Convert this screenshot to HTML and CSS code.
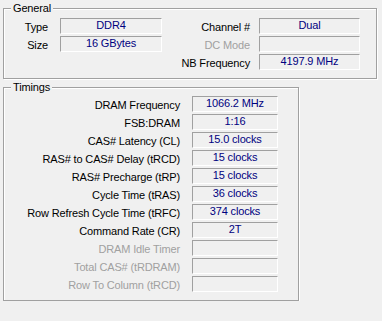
FILE: index.html
```html
<!DOCTYPE html>
<html lang="en">
<head>
    <meta charset="UTF-8">
    <title>Memory</title>
    <link rel="stylesheet" href="styles.css">
</head>
<body>
    <div class="tab">
        <!-- General -->
        <div class="group general">
            <span class="legend">General</span>
            <div class="rows general-rows">
                <div class="label left">Type</div>
                <div class="field">DDR4</div>
                <div class="label right">Channel #</div>
                <div class="field">Dual</div>

                <div class="label left">Size</div>
                <div class="field">16 GBytes</div>
                <div class="label right off">DC Mode</div>
                <div class="field"></div>

                <div></div>
                <div></div>
                <div class="label right">NB Frequency</div>
                <div class="field">4197.9 MHz</div>
            </div>
        </div>

        <!-- Timings -->
        <div class="group timings">
            <span class="legend">Timings</span>
            <div class="rows timing-rows">
                <div class="label">DRAM Frequency</div>
                <div class="field">1066.2 MHz</div>
                <div class="label">FSB:DRAM</div>
                <div class="field">1:16</div>
                <div class="label">CAS# Latency (CL)</div>
                <div class="field">15.0 clocks</div>
                <div class="label">RAS# to CAS# Delay (tRCD)</div>
                <div class="field">15 clocks</div>
                <div class="label">RAS# Precharge (tRP)</div>
                <div class="field">15 clocks</div>
                <div class="label">Cycle Time (tRAS)</div>
                <div class="field">36 clocks</div>
                <div class="label">Row Refresh Cycle Time (tRFC)</div>
                <div class="field">374 clocks</div>
                <div class="label">Command Rate (CR)</div>
                <div class="field">2T</div>
                <div class="label off">DRAM Idle Timer</div>
                <div class="field"></div>
                <div class="label off">Total CAS# (tRDRAM)</div>
                <div class="field"></div>
                <div class="label off">Row To Column (tRCD)</div>
                <div class="field"></div>
            </div>
        </div>
    </div>
</body>
</html>
```

FILE: styles.css
```css
body {
    margin: 0;
    background-color: #f0f0f0;
    font-family: "Liberation Sans", Arial, sans-serif;
    font-size: 11px;
    letter-spacing: -0.15px;
    color: #000;
}
.tab {
    padding: 8px 0 0 3px;
}
.group {
    position: relative;
    border: 1px solid #a0a0a0;
    box-shadow: 1px 1px 0 #fff, inset 1px 1px 0 #fff;
}
.general {
    width: 372px;
    padding: 9px 0 8px 0;
}
.timings {
    width: 294px;
    margin-top: 8px;
    padding: 8px 0 8px 0;
}
.legend {
    position: absolute;
    left: 7px;
    top: -8px;
    padding: 0 2px;
    line-height: 14px;
    background-color: #f0f0f0;
}
.rows {
    display: grid;
    grid-auto-rows: 16px;
    row-gap: 2px;
}
.general-rows {
    grid-template-columns: 56px 102px 97px 101px;
}
.timing-rows {
    grid-template-columns: 188px 86px;
}
.label {
    text-align: right;
    white-space: nowrap;
    line-height: 14px;
    padding-top: 2px;
    padding-right: 12px;
}
.label.right {
    padding-right: 9px;
}
.label.off {
    color: #a0a0a0;
}
.field {
    box-sizing: border-box;
    border-top: 1px solid #a0a0a0;
    border-left: 1px solid #a0a0a0;
    border-bottom: 1px solid #fff;
    border-right: 1px solid #fff;
    color: #000080;
    text-align: center;
    line-height: 13px;
    white-space: nowrap;
}
```
